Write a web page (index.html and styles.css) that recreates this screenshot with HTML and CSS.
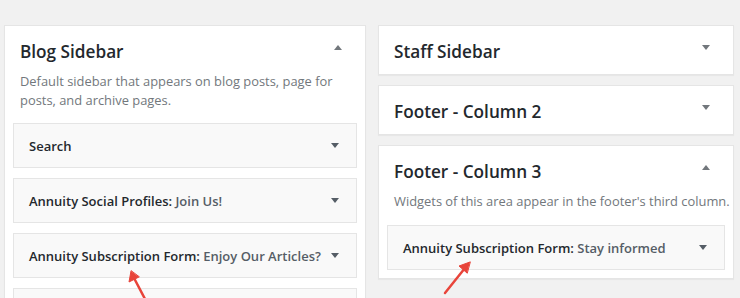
FILE: index.html
```html
<!DOCTYPE html>
<html>
<head>
<meta charset="utf-8">
<link rel="stylesheet" href="styles.css">
</head>
<body>
<div class="page">
  <div class="col col-left">
    <div class="card card-tall">
      <div class="card-head">
        <h2 class="card-title">Blog Sidebar</h2>
        <span class="tri tri-up"></span>
      </div>
      <p class="card-desc">Default sidebar that appears on blog posts, page for posts, and archive pages.</p>
      <div class="widgets">
        <div class="widget"><span class="w-title">Search</span><span class="tri tri-down"></span></div>
        <div class="widget"><span class="w-title">Annuity Social Profiles: <span class="w-sub">Join Us!</span></span><span class="tri tri-down"></span></div>
        <div class="widget"><span class="w-title">Annuity Subscription Form: <span class="w-sub">Enjoy Our Articles?</span></span><span class="tri tri-down"></span></div>
        <div class="widget"><span class="w-title">&nbsp;</span></div>
      </div>
    </div>
  </div>
  <div class="col col-right">
    <div class="card">
      <div class="card-head">
        <h2 class="card-title">Staff Sidebar</h2>
        <span class="tri tri-down head-tri"></span>
      </div>
    </div>
    <div class="card">
      <div class="card-head">
        <h2 class="card-title">Footer - Column 2</h2>
        <span class="tri tri-down head-tri"></span>
      </div>
    </div>
    <div class="card">
      <div class="card-head">
        <h2 class="card-title">Footer - Column 3</h2>
        <span class="tri tri-up"></span>
      </div>
      <p class="card-desc">Widgets of this area appear in the footer's third column.</p>
      <div class="widgets widgets-short">
        <div class="widget"><span class="w-title">Annuity Subscription Form: <span class="w-sub">Stay informed</span></span><span class="tri tri-down"></span></div>
      </div>
    </div>
  </div>
</div>
<svg class="annot" width="740" height="298" viewBox="0 0 740 298">
  <g stroke="#e8443a" stroke-width="2.5" fill="#e8443a" stroke-linecap="round">
    <line x1="145" y1="299" x2="134" y2="278"/>
    <polygon points="131,271 129,282 139,277" stroke-width="1"/>
    <line x1="445" y1="293" x2="465" y2="268"/>
    <polygon points="470,262 459,266 467,273" stroke-width="1"/>
  </g>
</svg>
</body>
</html>
```

FILE: styles.css
```css
html, body {
  margin: 0;
  padding: 0;
  background: #f1f1f1;
  overflow: hidden;
  height: 298px;
}
body {
  position: relative;
  font-family: "Open Sans", "Noto Sans", sans-serif;
  color: #23282d;
}
.page {
  display: flex;
  gap: 12px;
  padding: 25px 0 0 4px;
  align-items: flex-start;
}
.col {
  display: flex;
  flex-direction: column;
  gap: 10px;
}
.col-left { width: 362px; }
.col-right { width: 356px; }
.card {
  background: #fff;
  border: 1px solid #e5e5e5;
  box-shadow: 0 1px 1px rgba(0,0,0,0.04);
}
.card-tall { min-height: 400px; }
.card-head {
  display: flex;
  align-items: center;
  justify-content: space-between;
  height: 48px;
  padding: 0 23px 0 15px;
}
.card-title {
  margin: 0;
  font-size: 17.2px;
  font-weight: 600;
  line-height: 1;
  padding-top: 3px;
  color: #23282d;
}
.tri {
  display: inline-block;
  width: 0;
  height: 0;
  border-left: 4px solid transparent;
  border-right: 4px solid transparent;
}
.tri-up {
  border-bottom: 5px solid #72777c;
  margin-bottom: 6px;
}
.tri-down {
  border-top: 5px solid #555d66;
}
.head-tri {
  border-top-color: #72777c;
  margin-bottom: 6px;
}
.card-desc {
  margin: -2px 0 0 0;
  padding: 0 3px 0 15px;
  font-size: 12.9px;
  line-height: 19px;
  color: #72777c;
}
.widgets {
  display: flex;
  flex-direction: column;
  gap: 10px;
  padding: 13px 8px 0 8px;
}
.widgets-short {
  padding: 14px 8px 8px 8px;
}
.widget {
  display: flex;
  align-items: center;
  justify-content: space-between;
  height: 43px;
  padding: 0 17px 0 15px;
  background: #f9f9f9;
  border: 1px solid #e5e5e5;
}
.w-title {
  font-size: 13px;
  font-weight: 600;
  color: #23282d;
}
.w-sub {
  color: #555d66;
}
.annot {
  position: absolute;
  left: 0;
  top: 0;
  pointer-events: none;
}
```
